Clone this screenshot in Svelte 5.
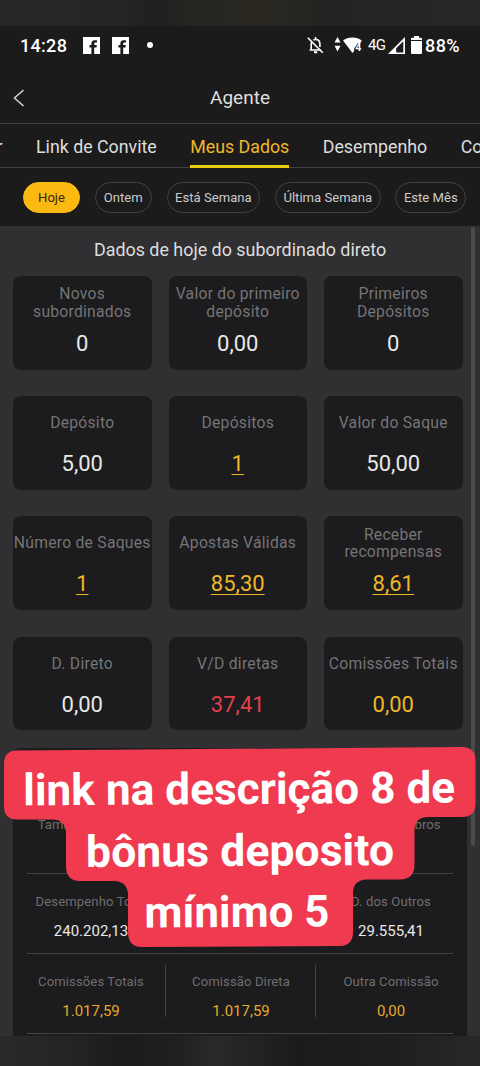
<script lang="ts">
  type Stat = { label: string; value: string; tone?: string; link?: boolean };

  const tabs = ['r', 'Link de Convite', 'Meus Dados', 'Desempenho', 'Comissões'];
  const activeTab = 'Meus Dados';

  const periods = ['Hoje', 'Ontem', 'Está Semana', 'Última Semana', 'Este Mês'];
  let period = $state('Hoje');

  const stats: Stat[] = [
    { label: 'Novos subordinados', value: '0' },
    { label: 'Valor do primeiro depósito', value: '0,00' },
    { label: 'Primeiros Depósitos', value: '0' },
    { label: 'Depósito', value: '5,00' },
    { label: 'Depósitos', value: '1', tone: 'gold', link: true },
    { label: 'Valor do Saque', value: '50,00' },
    { label: 'Número de Saques', value: '1', tone: 'gold', link: true },
    { label: 'Apostas Válidas', value: '85,30', tone: 'gold', link: true },
    { label: 'Receber recompensas', value: '8,61', tone: 'gold', link: true },
    { label: 'D. Direto', value: '0,00' },
    { label: 'V/D diretas', value: '37,41', tone: 'red' },
    { label: 'Comissões Totais', value: '0,00', tone: 'gold' }
  ];

  const totals: Stat[][] = [
    [
      { label: 'Tamanho do Time', value: '' },
      { label: '', value: '' },
      { label: 'Outros Membros', value: '' }
    ],
    [
      { label: 'Desempenho Total', value: '240.202,13' },
      { label: '', value: '' },
      { label: 'D. dos Outros', value: '29.555,41' }
    ],
    [
      { label: 'Comissões Totais', value: '1.017,59', tone: 'gold' },
      { label: 'Comissão Direta', value: '1.017,59', tone: 'gold' },
      { label: 'Outra Comissão', value: '0,00', tone: 'gold' }
    ]
  ];
</script>

<div class="screen">
  <div class="edge edge-top"></div>

  <div class="status">
    <span class="clock">14:28</span>
    {#each [0, 1] as n (n)}
      <svg class="fb" width="17" height="17" viewBox="0 0 17 17">
        <path fill="#fff" d="M0 0H17V17H11.2V10.500h2.300l.3-2.500h-2.600V6.800c0-.8.3-1.200 1.200-1.200h1.600V3.200h-2.400c-2.200 0-3.200 1.300-3.200 3.300V8H6.500v2.500h1.900V17H0z" />
      </svg>
    {/each}
    <span class="dot"></span>
    <svg class="bell" width="17" height="18" viewBox="0 0 17 18" fill="none" stroke="#fff" stroke-width="1.6">
      <path d="M2.600 14h11.300M4.200 14V8.200c0-1 .2-1.800.7-2.500M6.400 4.100c.6-.4 1.300-.6 2.200-.6 2.700 0 4.300 2 4.300 4.600V11" />
      <path d="M8.600 1v2.500M.8 1.800l15 15" />
      <path d="M7 16.200h3.200" stroke-width="2" />
    </svg>
    <svg class="wifi" width="29" height="18" viewBox="0 0 29 18" fill="#fff">
      <path d="M3.500 1l3 5.500h-6zM3.500 15.500l3-5.800h-6z" />
      <path d="M9 4.500C11.500 2.500 14.500 1.400 18.500 1.400c3.800 0 6.600 1 9.300 3.100l-1.500 2.700h-2.500l-3.700 5.300v2.400L18.500 17z" />
      <text x="21.200" y="15" font-size="10.500" font-weight="700">4</text>
    </svg>
    <span class="net">4G</span>
    <svg class="signal" width="17" height="17" viewBox="0 0 17 17">
      <path fill="#fff" fill-rule="evenodd" d="M17 0v17H0zM15.300 4.200L8.200 11.300v4.100h7.100z" />
    </svg>
    <svg class="battery" width="11" height="18" viewBox="0 0 11 18" fill="#fff">
      <path d="M3 0h5v1.700h2q1 0 1 1V4H0V2.700q0-1 1-1h2zM0 5h11v12q0 1-1 1H1q-1 0-1-1z" />
    </svg>
    <span class="percent">88%</span>
  </div>

  <header>
    <svg class="back" width="12" height="18" viewBox="0 0 12 18" fill="none" stroke="#d0d0d0" stroke-width="1.6">
      <polyline points="10.500 1 1.500 9 10.500 17" />
    </svg>
    <h1>Agente</h1>
  </header>

  <nav>
    {#each tabs as tab}
      <span class="tab" class:active={tab === activeTab}>{tab}</span>
    {/each}
  </nav>

  <div class="periods">
    {#each periods as p}
      <button class="chip" class:selected={p === period} onclick={() => (period = p)}>{p}</button>
    {/each}
  </div>

  <main>
    <h2>Dados de hoje do subordinado direto</h2>
    <div class="grid">
      {#each stats as stat}
        <div class="card">
          <div class="label">{stat.label}</div>
          <div class="value {stat.tone ?? ''}" class:link={stat.link}>{stat.value}</div>
        </div>
      {/each}
    </div>

    <section class="totals">
      {#each totals as row}
        <div class="row">
          {#each row as cell}
            <div class="cell">
              <span class="cell-label">{cell.label}</span>
              <span class="cell-value {cell.tone ?? ''}">{cell.value}</span>
            </div>
          {/each}
        </div>
      {/each}
    </section>
    <div class="scrollbar"></div>
  </main>

  <div class="edge edge-bottom"></div>

  <svg class="banner" width="480" height="215" viewBox="0 740 480 215">
    <path
      fill="#f03a4f"
      d="M17 750.500L462 747Q475.500 747 475.500 761V803Q475.500 817 462 817H428Q414.500 817 414.500 831V865Q414.500 879 400 879.500H367Q353 880 353 893V932Q353 945.500 340 946L142 947Q128.500 947 128 933V895Q127.500 881 114 881H80Q66.500 881 66 867V833Q65.500 819.500 52 819.500H18Q4 820 4 806V764Q4 750.500 17 750.500Z"
    />
    <g fill="#fff" font-size="44" font-weight="700" transform="rotate(-0.35 240 850)">
      <text x="23.500" y="804" textLength="432" lengthAdjust="spacingAndGlyphs">link na descrição 8 de</text>
      <text x="86" y="866" textLength="308" lengthAdjust="spacingAndGlyphs">bônus deposito</text>
      <text x="144" y="927" textLength="185" lengthAdjust="spacingAndGlyphs">mínimo 5</text>
    </g>
  </svg>
</div>

<style>
  :global(body) {
    background: #1c1b1c;
  }

  .screen {
    position: relative;
    display: flex;
    flex-direction: column;
    width: 480px;
    height: 1066px;
    overflow: hidden;
    background: #1c1b1c;
    color: #dedede;
    font-family: Roboto, sans-serif;
  }

  .edge-top {
    height: 26px;
    background: linear-gradient(90deg, #272727, #252525 25%, #202020 32%, #272520 42%, #292720 55%, #222422 68%, #262827);
  }

  .edge-bottom {
    height: 30px;
    background: linear-gradient(90deg, #29282a, #242325 15%, #1c1b1c 25%, #202020 37%, #29282a 45%, #1c1b1c 62%, #1e1d1f 80%, #28272a);
  }

  .status {
    display: flex;
    align-items: center;
    height: 38px;
    padding-left: 20px;
    color: #fff;
    font-size: 18px;
    font-weight: 500;
  }

  .clock {
    width: 48px;
    letter-spacing: 0.3px;
  }

  .fb {
    margin-left: 15px;
  }

  .fb + .fb {
    margin-left: 12px;
  }

  .dot {
    width: 6px;
    height: 6px;
    margin-left: 18px;
    border-radius: 50%;
    background: #fff;
  }

  .bell {
    margin-left: 154px;
  }

  .wifi {
    margin-left: 10px;
  }

  .net {
    width: 18px;
    margin-left: 5px;
    font-size: 15px;
    font-weight: 400;
    letter-spacing: -0.8px;
  }

  .signal {
    margin-left: 2px;
  }

  .battery {
    margin-left: 6px;
  }

  .percent {
    margin-left: 3px;
    letter-spacing: 0.4px;
  }

  header {
    display: grid;
    grid-template-columns: 60px 1fr 60px;
    align-items: center;
    height: 59px;
    box-sizing: border-box;
    padding-top: 8px;
  }

  .back {
    margin-left: 13px;
  }

  h1 {
    margin: 0;
    text-align: center;
    font-size: 19px;
    font-weight: 400;
  }

  nav {
    display: flex;
    gap: 33.500px;
    height: 45px;
    box-sizing: border-box;
    border-top: 1px solid #404041;
    border-bottom: 1px solid #404041;
    white-space: nowrap;
  }

  .tab {
    flex: none;
    height: 44px;
    box-sizing: border-box;
    font-size: 17.800px;
    line-height: 46px;
  }

  .tab:first-child {
    width: 2.500px;
    direction: rtl;
  }

  .tab.active {
    border-bottom: 3px solid #e8cf0a;
    color: #efb72a;
  }

  .periods {
    display: flex;
    gap: 14.800px;
    height: 58px;
    padding: 14px 0 0 23px;
    box-sizing: border-box;
  }

  .chip {
    flex: none;
    min-width: 57px;
    height: 31px;
    padding: 0 7.500px;
    border: 1px solid #424143;
    border-radius: 16px;
    background: transparent;
    color: #cbcbcb;
    font-family: inherit;
    font-size: 13.100px;
  }

  .chip.selected {
    border-color: #fbb911;
    background: #fbb911;
    color: #3a2a08;
  }

  main {
    position: relative;
    flex: 1;
    min-height: 0;
    overflow: hidden;
    padding-left: 13px;
    background: #303032;
  }

  h2 {
    width: 454px;
    height: 50px;
    margin: 0;
    text-align: center;
    font-size: 17.900px;
    font-weight: 400;
    line-height: 47px;
  }

  .grid {
    display: grid;
    grid-template-columns: repeat(3, 138.500px);
    grid-auto-rows: 93.5px;
    gap: 26.700px 17px;
  }

  .card {
    display: flex;
    flex-direction: column;
    align-items: center;
    border-radius: 8px;
    background: #1c1b1d;
    text-align: center;
  }

  .label {
    display: flex;
    align-items: center;
    justify-content: center;
    height: 36px;
    margin-top: 9px;
    color: #757476;
    font-size: 15.700px;
    line-height: 17.800px;
    letter-spacing: 0.25px;
  }

  .value {
    margin-top: 9px;
    color: #e8e8e8;
    font-size: 22px;
    line-height: 28px;
  }

  .gold {
    color: #efb72a;
  }

  .red {
    color: #e2404b;
  }

  .link {
    text-decoration: underline;
    text-decoration-thickness: 1px;
    text-underline-offset: 3px;
  }

  .totals {
    width: 454px;
    height: 300px;
    margin-top: 18px;
    padding: 46px 1px 0 3px;
    box-sizing: border-box;
    border-radius: 8px 8px 0 0;
    background: #1c1b1d;
  }

  .row {
    display: grid;
    grid-template-columns: repeat(3, 150px);
    grid-template-rows: 52px;
    height: 80px;
    box-sizing: border-box;
    padding-top: 11px;
    background: linear-gradient(#434244, #434244) 11px 100% / 426px 1px no-repeat;
  }

  .row:first-child {
    padding-top: 14px;
  }

  .cell {
    display: flex;
    flex-direction: column;
    align-items: center;
    white-space: nowrap;
  }

  .cell + .cell {
    box-shadow: -1px 0 #434244;
  }

  .cell-label {
    flex: none;
    height: 30px;
    color: #6f6e70;
    font-size: 13.100px;
    line-height: 34px;
    letter-spacing: 0.1px;
  }

  .cell-value {
    flex: none;
    color: #e8e8e8;
    font-size: 15px;
    line-height: 33px;
  }

  .cell-value.gold {
    color: #e5a92c;
  }

  .scrollbar {
    position: absolute;
    top: 1px;
    left: 471px;
    width: 4px;
    height: 619px;
    border-radius: 2px;
    background: #4b4a4d;
  }

  .banner {
    position: absolute;
    top: 740px;
    left: 0;
    font-family: Roboto, sans-serif;
  }
</style>
